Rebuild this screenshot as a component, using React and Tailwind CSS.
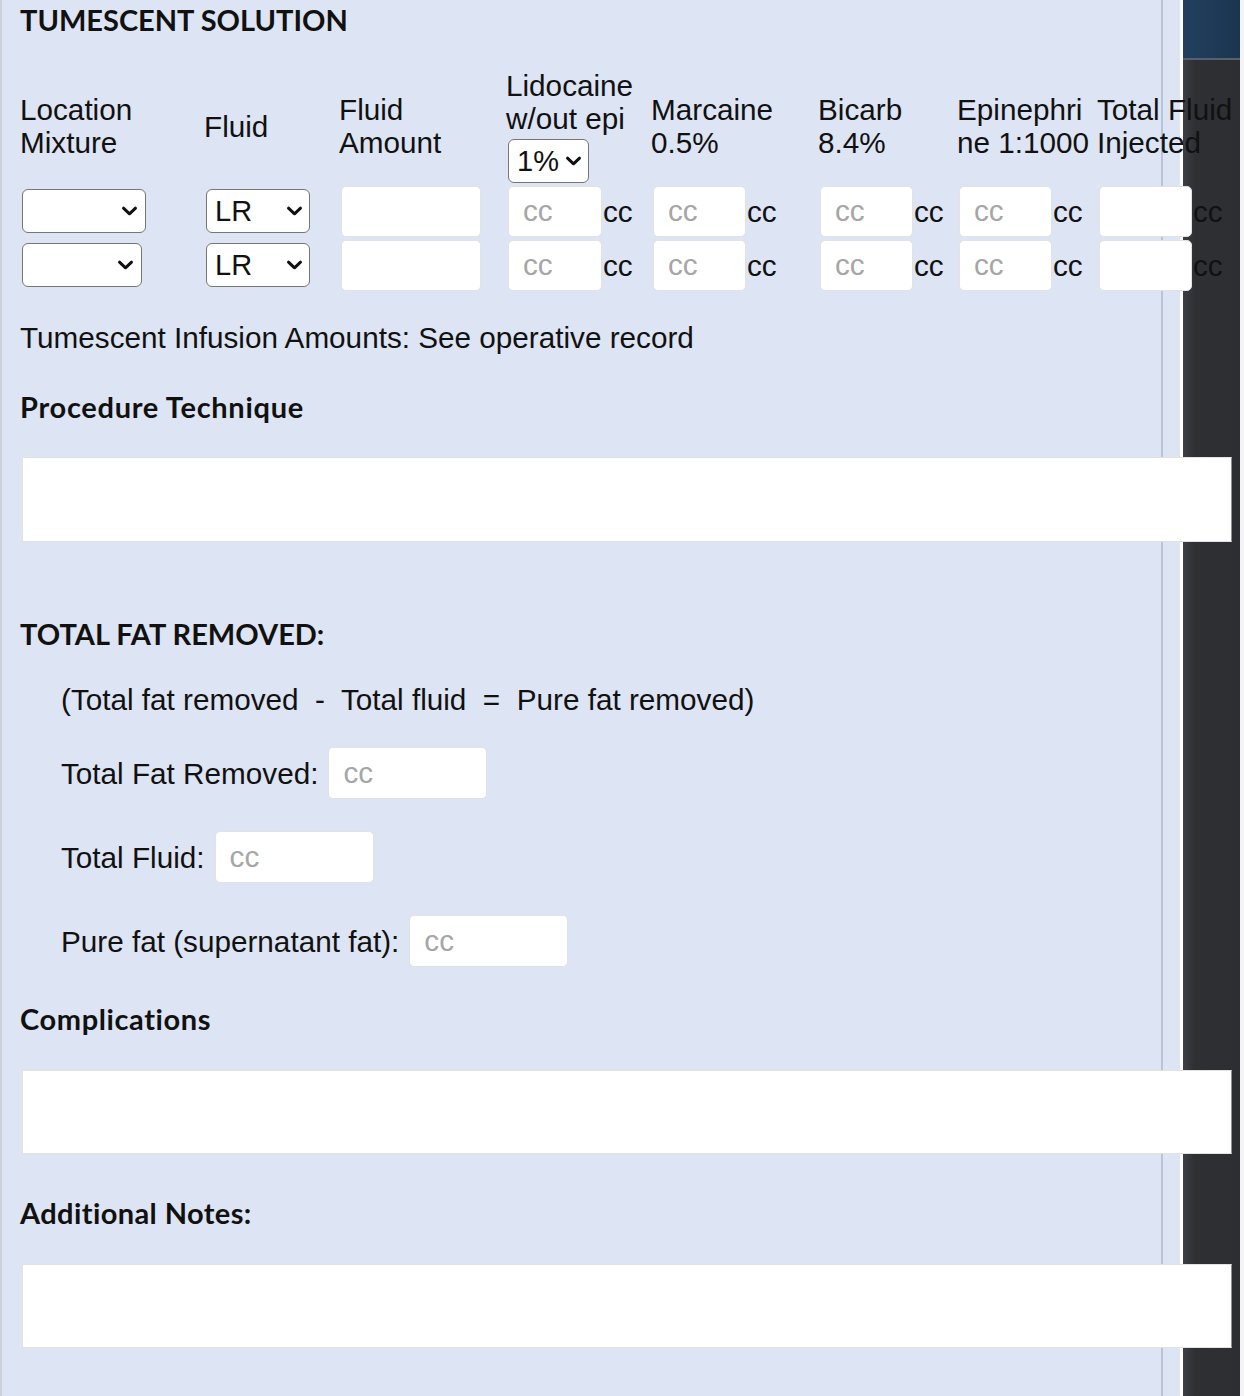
import React from "react";

const Chevron = ({ right = "right-[8px]" }) => (
  <svg
    width="17"
    height="10"
    viewBox="0 0 17 10"
    className={`pointer-events-none absolute top-1/2 -translate-y-1/2 ${right}`}
  >
    <path d="M2.5 2.2l6 5.6 6-5.6" fill="none" stroke="#111" strokeWidth="3" strokeLinecap="round" strokeLinejoin="round" />
  </svg>
);

function Select({ width, value, pad = "pl-[8px]", right }) {
  return (
    <div className={`relative ml-[2px] h-[44px] ${width}`}>
      <select
        defaultValue={value}
        className={`h-full w-full appearance-none rounded-[6px] border-[1.5px] border-[#767676] bg-white ${pad} text-[29px] leading-[40px] text-[#111] outline-none`}
      >
        <option value={value}>{value}</option>
      </select>
      <Chevron right={right} />
    </div>
  );
}

function CcInput({ width = "w-[94px]", ph = "cc" }) {
  return (
    <input
      placeholder={ph}
      className={`ml-[2px] h-[51px] ${width} rounded-[5px] border border-[#e2e2e2] bg-white pl-[14px] text-[29.7px] text-[#111] outline-none placeholder:text-[#a6a6a6]`}
    />
  );
}

function CcCell({ width, showPh = true }) {
  return (
    <div className="flex items-center">
      <CcInput width={width} ph={showPh ? "cc" : ""} />
      <span className="ml-[1px]">cc</span>
    </div>
  );
}

const Heading = ({ children, className = "" }) => (
  <div
    className={`font-['Lato','Inter',sans-serif] text-[29px] font-bold leading-[33px] text-[#111] [font-variant-ligatures:none] ${className}`}
  >
    {children}
  </div>
);

function Row({ first }) {
  return (
    <>
      <Select width={first ? "w-[124px]" : "w-[120px]"} value="" />
      <Select width="w-[104px]" value="LR" right="right-[7px]" />
      <CcInput width="w-[140px]" ph="" />
      <CcCell width="w-[94px]" />
      <CcCell width="w-[93px]" />
      <CcCell width="w-[93px]" />
      <CcCell width="w-[93px]" />
      <CcCell width="w-[93px]" showPh={false} />
    </>
  );
}

function FieldRow({ label, className = "" }) {
  return (
    <div className={`ml-[41px] flex items-center ${className}`}>
      <span>{label}</span>
      <input
        placeholder="cc"
        className="ml-[10px] h-[52px] w-[159px] rounded-[5px] border border-[#e2e2e2] bg-white pl-[14px] text-[29.7px] outline-none placeholder:text-[#a6a6a6]"
      />
    </div>
  );
}

const TextBox = ({ h, className = "" }) => (
  <textarea
    className={`ml-[2px] block w-[1210px] shrink-0 resize-none border border-[#e2e2e2] border-r-[#8f8f8f] bg-white outline-none ${h} ${className}`}
  />
);

export default function App() {
  return (
    <div className="flex h-[1396px] w-[1244px] overflow-hidden bg-white font-['Liberation_Sans',Arial,sans-serif] text-[29.7px] leading-[33px] text-[#111]">
      <div className="relative z-10 flex w-[1180px] shrink-0 border-l-2 border-[#cdd2da] bg-[#dde4f3]">
        <div className="flex w-[1161px] shrink-0 flex-col border-r-2 border-[#b8c3d7] pl-[18px]">
          <Heading className="leading-[40px]">TUMESCENT SOLUTION</Heading>

          <div className="mt-[28px] grid grid-cols-[184px_135px_167px_145px_167px_139px_140px_150px] grid-rows-[116px_54px_54px] items-center">
            <div>Location<br />Mixture</div>
            <div>Fluid</div>
            <div>Fluid<br />Amount</div>
            <div>
              <div>Lidocaine<br />w/out epi</div>
              <div className="mt-[4px]">
                <Select width="w-[81px]" value="1%" pad="pl-[8px]" right="right-[7px]" />
              </div>
            </div>
            <div>Marcaine<br />0.5%</div>
            <div>Bicarb<br />8.4%</div>
            <div className="whitespace-nowrap">Epinephri<br />ne 1:1000</div>
            <div className="whitespace-nowrap">Total Fluid<br />Injected</div>
            <Row first />
            <Row />
          </div>

          <div className="mt-[29px]">Tumescent Infusion Amounts: See operative record</div>

          <Heading className="mt-[36px] tracking-[0.7px]">Procedure Technique</Heading>
          <TextBox h="h-[85px]" className="mt-[34px]" />

          <Heading className="mt-[75px]">TOTAL FAT REMOVED:</Heading>
          <div className="ml-[41px] mt-[33px] whitespace-pre">(Total fat removed  -  Total fluid  =  Pure fat removed)</div>
          <FieldRow label="Total Fat Removed:" className="mt-[31px]" />
          <FieldRow label="Total Fluid:" className="mt-[32px]" />
          <FieldRow label="Pure fat (supernatant fat):" className="mt-[32px]" />

          <Heading className="mt-[35px] tracking-[0.6px]">Complications</Heading>
          <TextBox h="h-[84px]" className="mt-[35px]" />

          <Heading className="mt-[42px] tracking-[0.4px]">Additional Notes:</Heading>
          <TextBox h="h-[84px]" className="mt-[35px]" />
        </div>
      </div>
      <div className="w-[3px] shrink-0 bg-white" />
      <div className="flex w-[57px] shrink-0 flex-col">
        <div className="h-[60px] shrink-0 border-b-2 border-[#566070] bg-[linear-gradient(to_right,#22405e,#1b3550)]" />
        <div className="flex-1 bg-[linear-gradient(to_right,#3c3f44,#2e3034_20%,#2c2e31)]" />
      </div>
      <div className="w-[4px] shrink-0 bg-[#f4f4f4]" />
    </div>
  );
}
